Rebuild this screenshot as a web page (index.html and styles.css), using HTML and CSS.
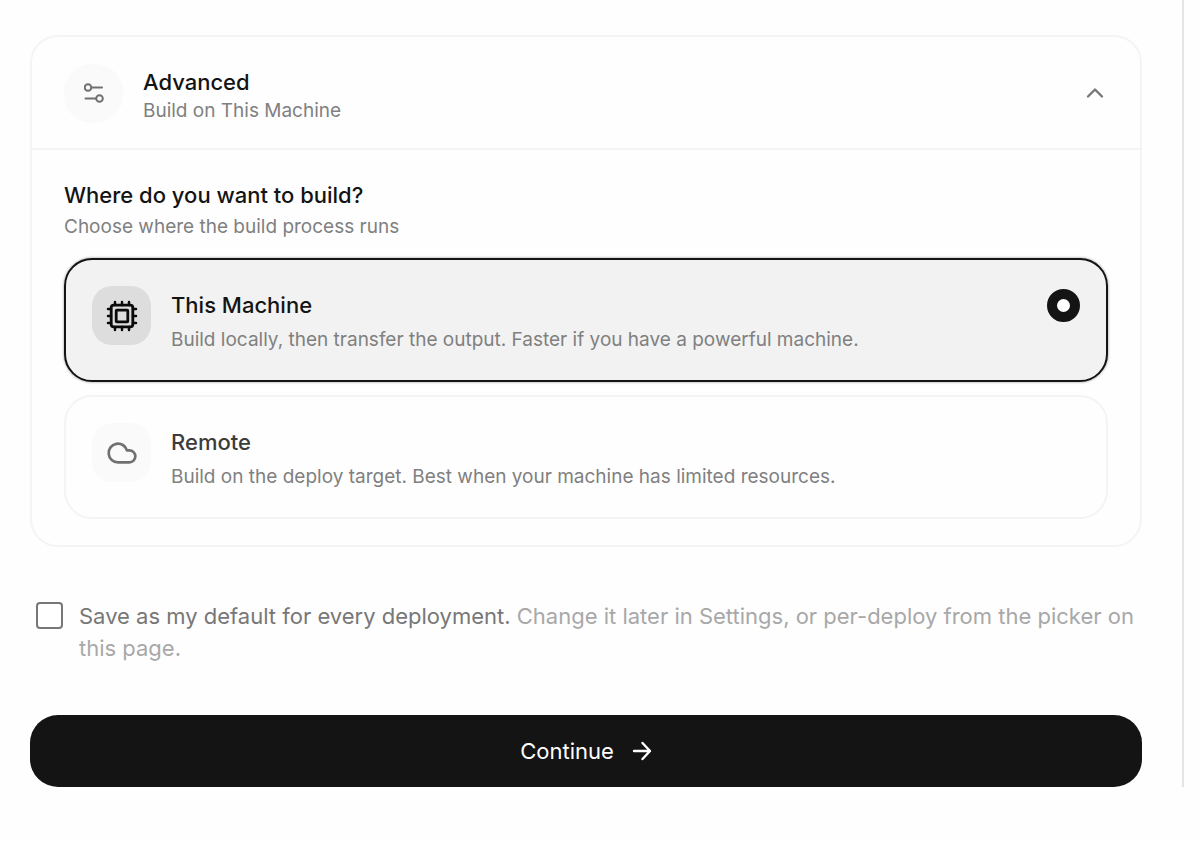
FILE: index.html
```html
<!DOCTYPE html>
<html lang="en">
<head>
    <meta charset="UTF-8">
    <meta name="viewport" content="width=device-width, initial-scale=1.0">
    <title>Build settings</title>
    <link rel="stylesheet" href="styles.css">
</head>
<body>
    <form class="panel">
        <section class="card">
            <button type="button" class="card-header" aria-expanded="true" aria-controls="build-options">
                <span class="icon-box round">
                    <svg width="20" height="20" viewBox="0 0 20 20" fill="none" stroke="currentColor" stroke-width="2" stroke-linecap="round">
                        <circle cx="4" cy="4.5" r="3.3"/>
                        <path d="M7.5 4.5H18"/>
                        <circle cx="15.5" cy="15.5" r="3.3"/>
                        <path d="M1.5 15.5H12"/>
                    </svg>
                </span>
                <span class="header-text">
                    <span class="title">Advanced</span>
                    <span class="subtitle">Build on This Machine</span>
                </span>
                <svg class="chevron" width="18" height="12" viewBox="0 0 18 12" fill="none" stroke="currentColor" stroke-width="2.4" stroke-linecap="round" stroke-linejoin="round">
                    <path d="M2 9.5L9 2.5L16 9.5"/>
                </svg>
            </button>

            <div class="card-body" id="build-options">
                <h2 class="title">Where do you want to build?</h2>
                <p class="subtitle">Choose where the build process runs</p>

                <div class="options">
                    <label class="option">
                        <span class="icon-box">
                            <svg width="32" height="32" viewBox="0 0 32 32" fill="none" stroke="currentColor" stroke-width="2.8" stroke-linecap="round" stroke-linejoin="round">
                                <rect x="5.2" y="5.2" width="21.6" height="21.6" rx="2.6"/>
                                <rect x="10.2" y="10.2" width="11.6" height="11.6" rx="0.6"/>
                                <path stroke-width="2.5" d="M9 5V2M16 5V2M23 5V2M9 30V27M16 30V27M23 30V27M5 9H2M5 16H2M5 23H2M30 9H27M30 16H27M30 23H27"/>
                            </svg>
                        </span>
                        <span class="option-text">
                            <span class="title">This Machine</span>
                            <span class="subtitle">Build locally, then transfer the output. Faster if you have a powerful machine.</span>
                        </span>
                        <input type="radio" name="build" value="local" checked>
                    </label>

                    <label class="option">
                        <span class="icon-box">
                            <svg width="32" height="32" viewBox="0 0 24 24" fill="none" stroke="currentColor" stroke-width="2" stroke-linecap="round" stroke-linejoin="round">
                                <path d="M17.5 19H9a7 7 0 1 1 6.71-9h1.79a4.5 4.5 0 1 1 0 9Z"/>
                            </svg>
                        </span>
                        <span class="option-text">
                            <span class="title">Remote</span>
                            <span class="subtitle">Build on the deploy target. Best when your machine has limited resources.</span>
                        </span>
                        <input type="radio" name="build" value="remote">
                    </label>
                </div>
            </div>
        </section>

        <label class="save-default">
            <input type="checkbox" name="save">
            <span>Save as my default for every deployment. <span class="hint">Change it later in Settings, or per-deploy from the picker on this page.</span></span>
        </label>

        <button type="submit" class="continue">
            Continue
            <svg width="20" height="20" viewBox="0 0 20 20" fill="none" stroke="currentColor" stroke-width="2.4" stroke-linecap="round" stroke-linejoin="round">
                <path d="M2 10H18M10.5 2L18 10L10.5 18"/>
            </svg>
        </button>
    </form>
</body>
</html>
```

FILE: styles.css
```css
* {
    margin: 0;
    padding: 0;
    box-sizing: border-box;
}

body {
    font-family: Inter, "Liberation Sans", sans-serif;
    background-color: #fefefe;
    color: #141414;
}

button,
input {
    font: inherit;
}

svg {
    display: block;
    flex-shrink: 0;
}

.panel {
    margin-right: 16px;
    padding: 35px 40px 0 30px;
    border-right: 2px solid #e4e4e4;
}

/* Card */
.card {
    border: 2px solid #f4f4f4;
    border-radius: 28px;
}

.card-header {
    display: flex;
    align-items: center;
    gap: 20px;
    width: 100%;
    padding: 23px 36px 22px 32px;
    background: none;
    border: none;
    border-bottom: 2px solid #f4f4f4;
    color: inherit;
    text-align: left;
    cursor: pointer;
}

.header-text {
    flex: 1;
    padding: 8px 0 1px;
}

.header-text .subtitle {
    margin-top: 1px;
}

.chevron {
    color: #777;
}

.title {
    display: block;
    font-size: 22px;
    font-weight: 500;
    line-height: 28px;
}

.subtitle {
    display: block;
    font-size: 19px;
    line-height: 28px;
    color: #808080;
}

.icon-box {
    display: flex;
    align-items: center;
    justify-content: center;
    flex-shrink: 0;
    width: 59px;
    height: 59px;
    border-radius: 20px;
    background-color: #fafafa;
    color: #707070;
}

.icon-box.round {
    border-radius: 28px;
}

.card-body {
    padding: 31px 32px 26px;
}

.card-body > .subtitle {
    margin-top: 4px;
}

/* Build options */
.options {
    display: flex;
    flex-direction: column;
    gap: 13px;
    margin-top: 17px;
}

.option {
    display: flex;
    align-items: flex-start;
    gap: 20px;
    padding: 26px;
    border: 2px solid #f4f4f4;
    border-radius: 28px;
    cursor: pointer;
}

.option-text {
    flex: 1;
    padding-top: 5px;
}

.option .title {
    color: #3c3c3c;
}

.option .subtitle {
    margin-top: 7px;
}

.option input {
    appearance: none;
    width: 33px;
    height: 33px;
    margin-top: 3px;
    border-radius: 50%;
}

.option input:checked {
    border: 10px solid #141414;
    background-color: #fff;
}

.option:has(input:checked) {
    border-color: #141414;
    background-color: #f2f2f2;
    box-shadow: 0 0 2px 1px #ccc;
}

.option:has(input:checked) .title {
    color: #141414;
}

.option:has(input:checked) .icon-box {
    background-color: #dddddd;
    color: #0a0a0a;
}

/* Save as default */
.save-default {
    display: flex;
    align-items: flex-start;
    gap: 16px;
    margin-top: 53px;
    padding-left: 6px;
    font-size: 22px;
    line-height: 32px;
    color: #777;
    cursor: pointer;
}

.save-default input {
    appearance: none;
    flex-shrink: 0;
    width: 27px;
    height: 27px;
    margin-top: 2px;
    border: 2px solid #777;
    border-radius: 4px;
    background-color: #fff;
}

.save-default input:checked {
    background-color: #141414;
}

.hint {
    color: #a8a8a8;
}

.continue {
    display: flex;
    align-items: center;
    justify-content: center;
    gap: 18px;
    width: 100%;
    margin-top: 51px;
    padding: 20px;
    border: none;
    border-radius: 28px;
    background-color: #141414;
    color: #fff;
    font-size: 22px;
    line-height: 32px;
    cursor: pointer;
}
```
